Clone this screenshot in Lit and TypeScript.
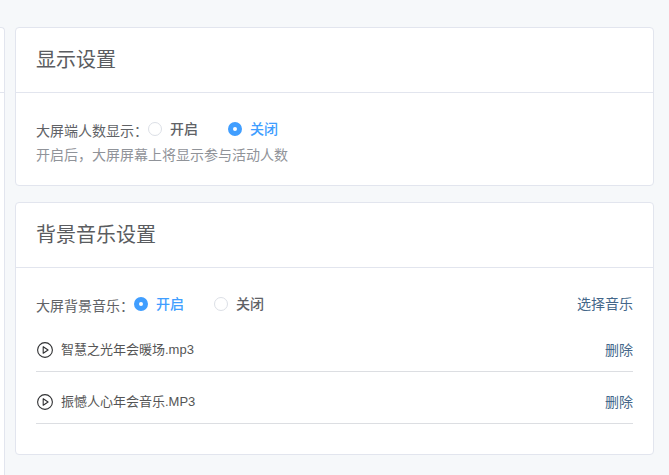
import { LitElement, html, css, svg } from "lit";
import { customElement, property, state } from "lit/decorators.js";

@customElement("settings-card")
export class SettingsCard extends LitElement {
  @property() heading = "";

  static styles = css`
    :host {
      display: block;
      background: #fff;
      border: 1px solid #e2e5ee;
      border-radius: 4px;
    }
    .title {
      margin: 0;
      padding: 16px 20px;
      border-bottom: 1px solid #e2e5ee;
      color: #5a5c60;
      font-size: 20px;
      font-weight: 400;
      line-height: 32px;
    }
    .body {
      padding: 20px;
    }
  `;

  render() {
    return html`
      <h2 class="title">${this.heading}</h2>
      <div class="body"><slot></slot></div>
    `;
  }
}

@customElement("switch-field")
export class SwitchField extends LitElement {
  @property() label = "";
  @property({ type: Boolean }) on = false;

  static styles = css`
    .field {
      display: flex;
      align-items: center;
      height: 32px;
    }
    .caption {
      padding-top: 4px;
      color: #606266;
    }
    .options {
      display: flex;
      gap: 30px;
    }
    .option {
      display: flex;
      align-items: center;
      gap: 8px;
      color: #606266;
      font-weight: 500;
      cursor: pointer;
    }
    .option:has(.radio:checked) {
      color: #409eff;
    }
    .radio {
      appearance: none;
      box-sizing: border-box;
      width: 14px;
      height: 14px;
      margin: 0;
      border: 1px solid #dcdfe6;
      border-radius: 50%;
      background: #fff;
      cursor: pointer;
    }
    .radio:checked {
      border: 5px solid #409eff;
    }
  `;

  private option(text: string, value: boolean) {
    return html`
      <label class="option">
        <input
          class="radio"
          type="radio"
          name="switch"
          .checked=${this.on === value}
          @change=${() => (this.on = value)}
        />
        <span>${text}</span>
      </label>
    `;
  }

  render() {
    return html`
      <div class="field" role="radiogroup" aria-labelledby="caption">
        <span class="caption" id="caption">${this.label}</span>
        <div class="options">
          ${this.option("开启", true)}${this.option("关闭", false)}
        </div>
      </div>
    `;
  }
}

const playIcon = svg`
  <circle cx="9" cy="9" r="7.4" />
  <path d="M7.2 5.7v6.6l4.9-3.3z" />
`;

@customElement("app-root")
export class AppRoot extends LitElement {
  @state() private tracks = ["智慧之光年会暖场.mp3", "振憾人心年会音乐.MP3"];

  static styles = css`
    :host {
      display: block;
      background: #f6f8fa;
      font: 14px/20px "Liberation Sans", "Noto Sans CJK SC", sans-serif;
    }
    .page {
      box-sizing: border-box;
      display: grid;
      grid-template-columns: 5px minmax(0, 1fr);
      gap: 10px;
      min-height: 100vh;
      padding: 27px 15px 0 0;
    }
    .side {
      border: 1px solid #e2e5ee;
      border-width: 1px 1px 0 0;
      border-radius: 0 4px 0 0;
      background: #fff;
    }
    .side-head {
      height: 64px;
      border-bottom: 1px solid #e2e5ee;
    }
    .cards {
      display: flex;
      flex-direction: column;
      gap: 16px;
      padding-bottom: 20px;
    }
    .hint {
      margin: 0;
      color: #909399;
    }
    .row {
      display: flex;
      align-items: center;
      justify-content: space-between;
    }
    .link {
      color: #44678a;
      text-decoration: none;
    }
    .tracks {
      margin: 0 0 10px;
      padding: 0;
      list-style: none;
    }
    .track {
      display: flex;
      align-items: center;
      gap: 7px;
      padding: 19px 0 10px;
      border-bottom: 1px solid #dcdee2;
      line-height: 22px;
    }
    .play {
      display: flex;
      padding: 0;
      border: 0;
      background: none;
      cursor: pointer;
    }
    .icon {
      width: 18px;
      height: 18px;
      fill: none;
      stroke: #303133;
      stroke-width: 1.1;
      stroke-linejoin: round;
    }
    .name {
      flex: 1;
      color: #555;
      font-size: 13px;
    }
  `;

  private remove(e: Event, track: string) {
    e.preventDefault();
    this.tracks = this.tracks.filter((t) => t !== track);
  }

  render() {
    return html`
      <div class="page">
        <div class="side"><div class="side-head"></div></div>
        <main class="cards">
          <settings-card heading="显示设置">
            <switch-field label="大屏端人数显示："></switch-field>
            <p class="hint">开启后，大屏屏幕上将显示参与活动人数</p>
          </settings-card>
          <settings-card heading="背景音乐设置">
            <div class="row">
              <switch-field label="大屏背景音乐：" on></switch-field>
              <a class="link" href="#music">选择音乐</a>
            </div>
            <ul class="tracks">
              ${this.tracks.map(
                (track) => html`
                  <li class="track">
                    <button class="play" aria-label="播放">
                      <svg class="icon" viewBox="0 0 18 18">${playIcon}</svg>
                    </button>
                    <span class="name">${track}</span>
                    <a class="link" href="#" @click=${(e: Event) => this.remove(e, track)}>删除</a>
                  </li>
                `
              )}
            </ul>
          </settings-card>
        </main>
      </div>
    `;
  }
}
